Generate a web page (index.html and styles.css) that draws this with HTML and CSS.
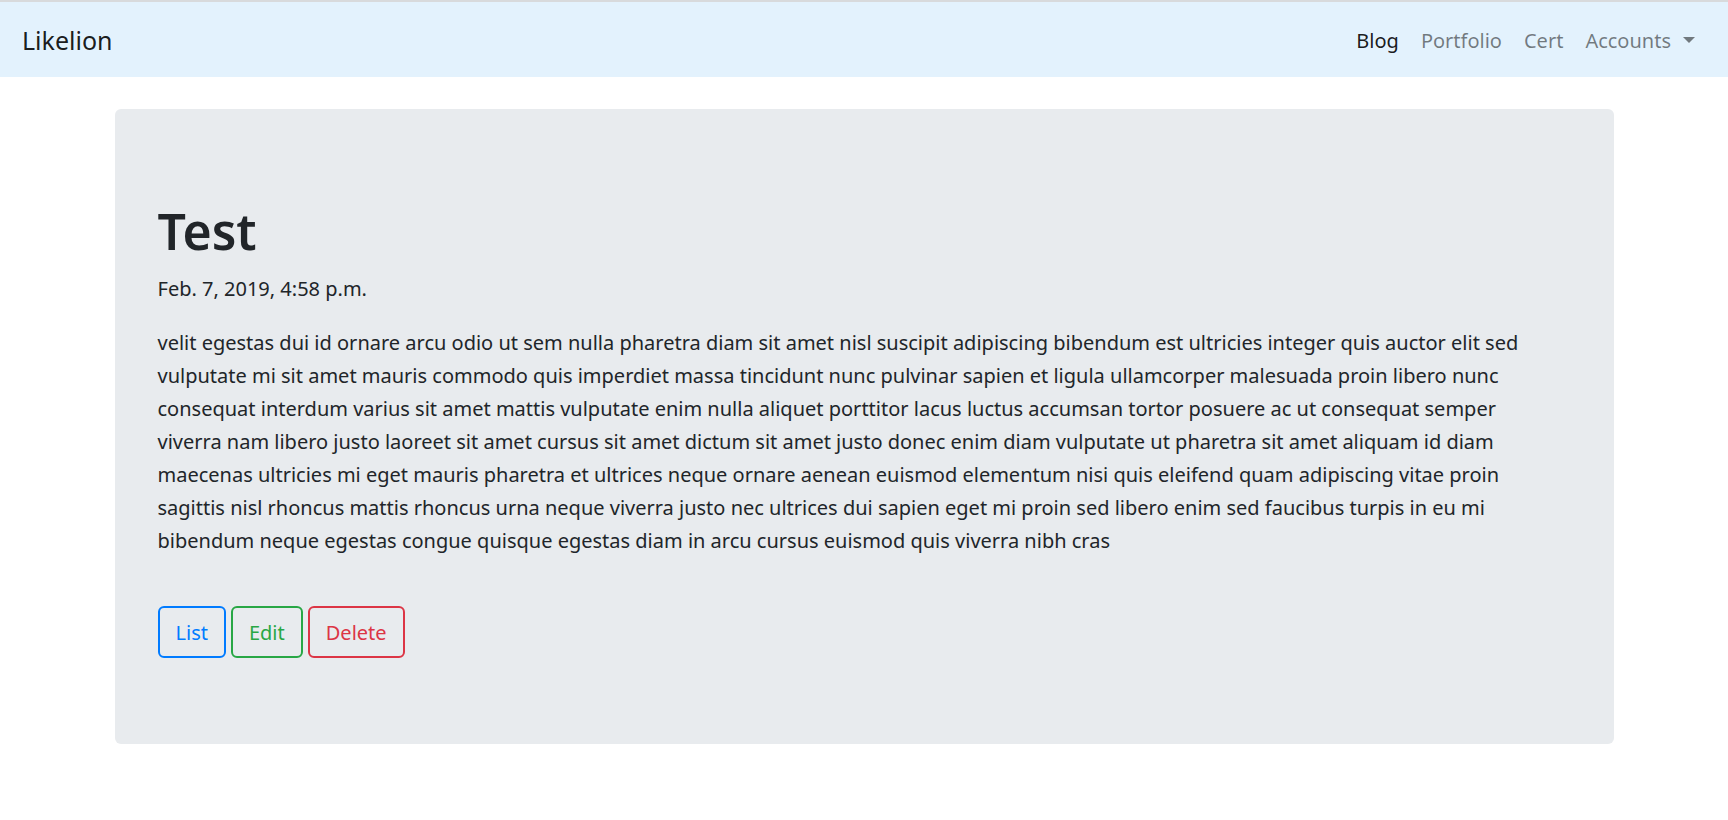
FILE: index.html
```html
<!DOCTYPE html>
<html lang="en">
<head>
<meta charset="utf-8">
<title>Test</title>
<link rel="stylesheet" href="styles.css">
</head>
<body>
<nav class="navbar">
  <a class="brand" href="#">Likelion</a>
  <ul class="nav-list">
    <li><a class="nav-link active" href="#">Blog</a></li>
    <li><a class="nav-link" href="#">Portfolio</a></li>
    <li><a class="nav-link" href="#">Cert</a></li>
    <li><a class="nav-link dropdown" href="#">Accounts</a></li>
  </ul>
</nav>
<main class="container">
  <article class="jumbotron">
    <h1 class="title">Test</h1>
    <p class="date">Feb. 7, 2019, 4:58 p.m.</p>
    <p class="body-text">velit egestas dui id ornare arcu odio ut sem nulla pharetra diam sit amet nisl suscipit adipiscing bibendum est ultricies integer quis auctor elit sed vulputate mi sit amet mauris commodo quis imperdiet massa tincidunt nunc pulvinar sapien et ligula ullamcorper malesuada proin libero nunc consequat interdum varius sit amet mattis vulputate enim nulla aliquet porttitor lacus luctus accumsan tortor posuere ac ut consequat semper viverra nam libero justo laoreet sit amet cursus sit amet dictum sit amet justo donec enim diam vulputate ut pharetra sit amet aliquam id diam maecenas ultricies mi eget mauris pharetra et ultrices neque ornare aenean euismod elementum nisi quis eleifend quam adipiscing vitae proin sagittis nisl rhoncus mattis rhoncus urna neque viverra justo nec ultrices dui sapien eget mi proin sed libero enim sed faucibus turpis in eu mi bibendum neque egestas congue quisque egestas diam in arcu cursus euismod quis viverra nibh cras</p>
    <div class="actions">
      <a class="btn btn-primary" href="#">List</a>
      <a class="btn btn-success" href="#">Edit</a>
      <a class="btn btn-danger" href="#">Delete</a>
    </div>
  </article>
</main>
</body>
</html>
```

FILE: styles.css
```css
* { box-sizing: border-box; }
body {
  margin: 0;
  background: #fff;
  color: #212529;
  font-family: "Noto Sans", "Open Sans", sans-serif;
  font-size: 20px;
  line-height: 32px;
}
a { text-decoration: none; }
.navbar {
  display: flex;
  align-items: center;
  justify-content: space-between;
  padding: 10px 22px 9px;
  border-top: 2px solid #d8dadc;
  background: #e3f2fd;
}
.brand { color: rgba(0, 0, 0, 0.9); font-size: 25px; line-height: 40px; }
.nav-list { display: flex; margin: 0; padding: 0; list-style: none; }
.nav-link { display: block; padding: 13px 11px 11px; color: rgba(0, 0, 0, 0.5); }
.nav-link.active { color: rgba(0, 0, 0, 0.9); }
.dropdown::after {
  content: "";
  display: inline-block;
  margin-left: 12px;
  vertical-align: 5px;
  border: 6px solid transparent;
  border-top-color: currentColor;
  border-bottom: 0;
}
.container { max-width: 1543px; margin: 0 auto; padding: 32px 22px; }
.jumbotron { padding: 91px 43px 86px; border-radius: 6px; background: #e8ebee; }
.title { margin: 0 0 11px; font-size: 50px; font-weight: 600; line-height: 62px; }
.date { margin: 0 0 21px; }
.body-text { margin: 0; padding-right: 22px; line-height: 33px; }
.actions { display: flex; gap: 5px; margin-top: 49px; }
.btn { padding: 9px 16px 7px; border: 2px solid currentColor; border-radius: 6px; }
.btn-primary { color: #007bff; }
.btn-success { color: #28a745; }
.btn-danger { color: #dc3545; }
```
